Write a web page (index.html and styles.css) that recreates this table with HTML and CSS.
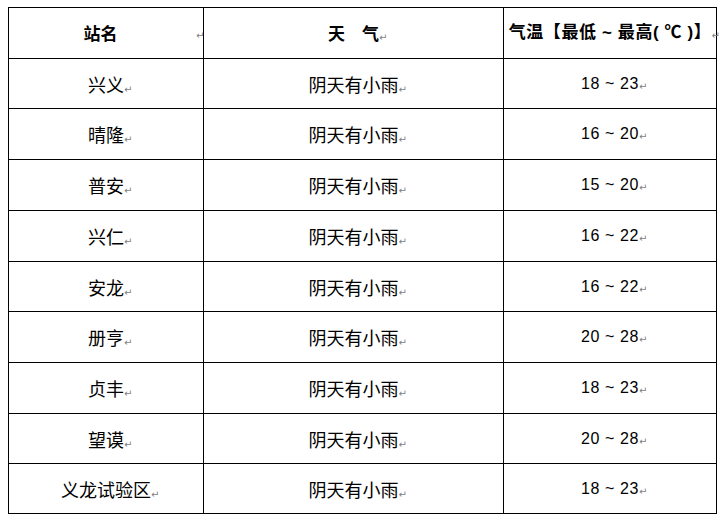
FILE: index.html
```html
<!DOCTYPE html>
<html lang="zh">
<head>
<meta charset="utf-8">
<title>天气预报</title>
<link rel="stylesheet" href="styles.css">
</head>
<body>
<table class="wx">
  <colgroup>
    <col class="c1"><col class="c2"><col class="c3">
  </colgroup>
  <thead>
    <tr class="h51">
      <th class="name-h">站名<span class="pm pm-right">↵</span></th>
      <th>天　气<span class="pm">↵</span></th>
      <th class="temp-h">气温【最低 ~ 最高( ℃ )】<span class="pm">↵</span></th>
    </tr>
  </thead>
  <tbody>
    <tr class="h50"><td>兴义<span class="pm">↵</span></td><td>阴天有小雨<span class="pm">↵</span></td><td class="t">18 ~ 23<span class="pm">↵</span></td></tr>
    <tr class="h51"><td>晴隆<span class="pm">↵</span></td><td>阴天有小雨<span class="pm">↵</span></td><td class="t">16 ~ 20<span class="pm">↵</span></td></tr>
    <tr class="h51"><td>普安<span class="pm">↵</span></td><td>阴天有小雨<span class="pm">↵</span></td><td class="t">15 ~ 20<span class="pm">↵</span></td></tr>
    <tr class="h51"><td>兴仁<span class="pm">↵</span></td><td>阴天有小雨<span class="pm">↵</span></td><td class="t">16 ~ 22<span class="pm">↵</span></td></tr>
    <tr class="h50"><td>安龙<span class="pm">↵</span></td><td>阴天有小雨<span class="pm">↵</span></td><td class="t">16 ~ 22<span class="pm">↵</span></td></tr>
    <tr class="h51"><td>册亨<span class="pm">↵</span></td><td>阴天有小雨<span class="pm">↵</span></td><td class="t">20 ~ 28<span class="pm">↵</span></td></tr>
    <tr class="h51"><td>贞丰<span class="pm">↵</span></td><td>阴天有小雨<span class="pm">↵</span></td><td class="t">18 ~ 23<span class="pm">↵</span></td></tr>
    <tr class="h50"><td>望谟<span class="pm">↵</span></td><td>阴天有小雨<span class="pm">↵</span></td><td class="t">20 ~ 28<span class="pm">↵</span></td></tr>
    <tr class="h50"><td>义龙试验区<span class="pm">↵</span></td><td>阴天有小雨<span class="pm">↵</span></td><td class="t">18 ~ 23<span class="pm">↵</span></td></tr>
  </tbody>
</table>
</body>
</html>
```

FILE: styles.css
```css
html, body {
  margin: 0;
  padding: 0;
  background: #fff;
}
body {
  padding: 7px 0 0 8px;
  font-family: "Liberation Sans", "Noto Sans CJK SC", sans-serif;
  color: #000;
}
.wx {
  border-collapse: collapse;
  table-layout: fixed;
  width: 709px;
}
.c1 { width: 195px; }
.c2 { width: 300px; }
.c3 { width: 213px; }
.wx th, .wx td {
  border: 1px solid #000;
  padding: 0;
  text-align: center;
  vertical-align: middle;
  position: relative;
  white-space: nowrap;
}
.h51 { height: 51px; }
.h50 { height: 50px; }
.wx th {
  font-family: "Noto Sans CJK SC", sans-serif;
  font-weight: bold;
  font-size: 17px;
  line-height: 20px;
}
.wx th.temp-h {
  font-family: "Liberation Sans", "Noto Sans CJK SC", sans-serif;
  font-size: 17px;
  letter-spacing: 0.6px;
}
.wx th.name-h {
  padding-right: 11px;
}
.wx td {
  font-family: "Noto Sans CJK SC", sans-serif;
  font-size: 18px;
  line-height: 22px;
}
.wx td.t {
  font-family: "Liberation Sans", "Noto Sans CJK SC", sans-serif;
  font-size: 16px;
  letter-spacing: 0.6px;
}
.pm {
  display: inline-block;
  width: 0;
  font-family: "DejaVu Sans", sans-serif;
  font-size: 10px;
  font-weight: normal;
  letter-spacing: 0;
  color: #7f7f7f;
  vertical-align: -1px;
  line-height: 10px;
}
.pm-right {
  position: absolute;
  right: 7px;
  top: 23px;
}
```
